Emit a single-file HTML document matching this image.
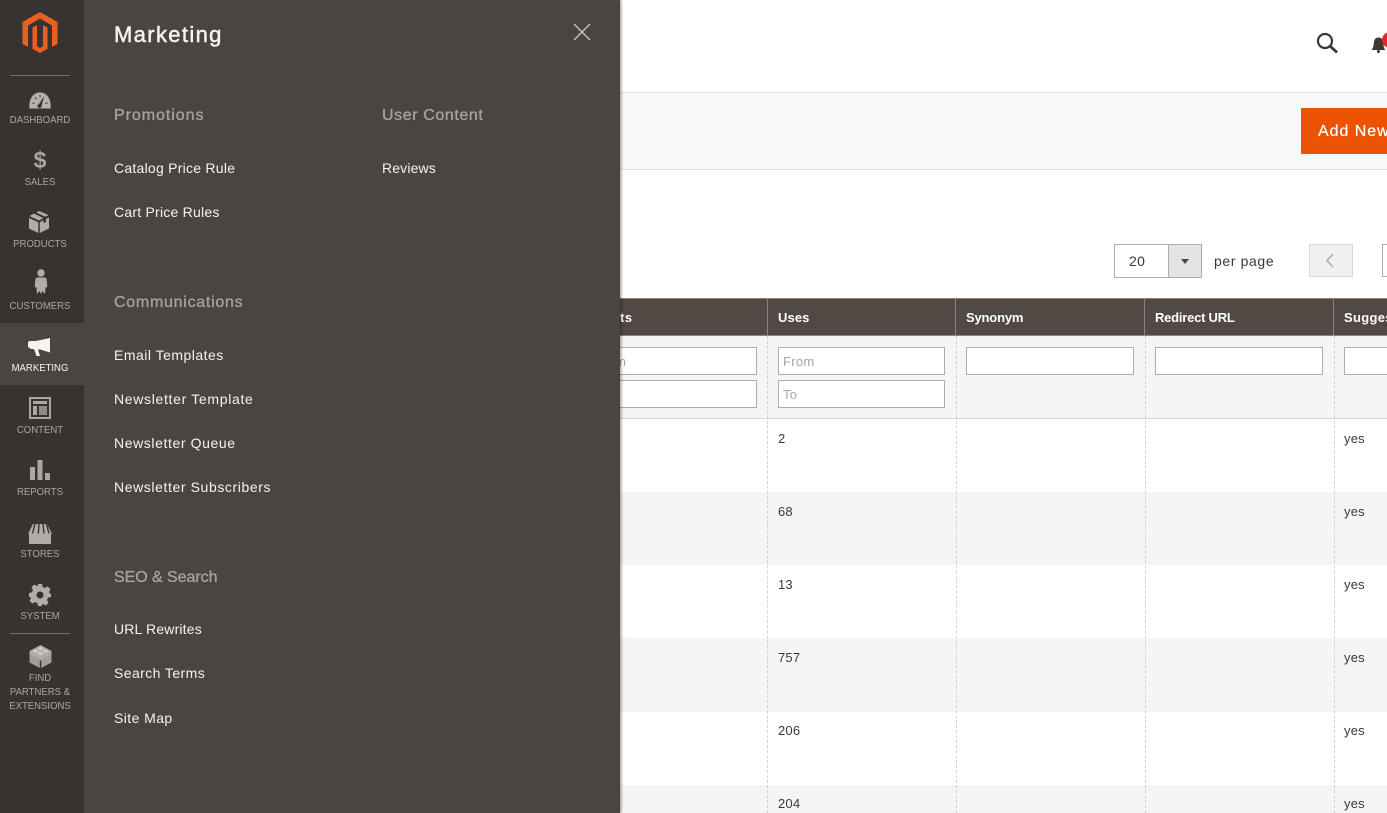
<!DOCTYPE html>
<html><head><meta charset="utf-8">
<style>
html,body{margin:0;padding:0;background:#fff}
body{width:1387px;height:813px;overflow:hidden;position:relative;font-family:"Liberation Sans",sans-serif;color:#41362f}
.a{position:absolute;white-space:nowrap}
#side{position:absolute;left:0;top:0;width:84px;height:813px;background:#373330}
#panel{position:absolute;left:84px;top:0;width:536px;height:813px;background:#4a4542;box-shadow:1px 0 3px rgba(0,0,0,.45)}
.nl{position:absolute;left:0;width:80px;text-align:center;font-size:10.5px;line-height:14px;color:#aaa6a0;transform:scaleX(.91);white-space:nowrap}
.ic{position:absolute}
.h{position:absolute;font-size:16px;font-weight:normal;color:#a6a19c;white-space:nowrap;line-height:20px;-webkit-text-stroke:.35px #a6a19c}
.l{position:absolute;font-size:14px;color:#f7f3eb;white-space:nowrap;line-height:18px}
.th{position:absolute;top:298px;height:38px;background:#514943;border-top:1px solid #8a837f;border-bottom:1px solid #8a837f;box-sizing:border-box}
.tt{position:absolute;top:309px;color:#fff;font-size:13px;font-weight:bold;line-height:17px;white-space:nowrap;letter-spacing:.1px}
.sep{position:absolute;top:298px;width:1px;height:38px;background:#8a837f}
.inp{position:absolute;height:28px;box-sizing:border-box;background:#fff;border:1px solid #adadad;font-size:13px;color:#a5a5a5;line-height:27px;padding-left:4px;letter-spacing:.3px}
.row{position:absolute;left:620px;width:767px}
.c{position:absolute;font-size:13px;color:#41362f;line-height:16px;letter-spacing:.2px}
.dash{position:absolute;top:336px;height:477px;width:0;border-left:1px dashed #d1d1d1}
</style></head><body>

<!-- page -->
<div class="a" style="left:620px;top:92px;width:767px;height:78px;background:#f8f8f8;border-top:1px solid #e3e3e3;border-bottom:1px solid #e3e3e3;box-sizing:border-box"></div>
<svg class="ic" style="left:1314px;top:30px" width="26" height="26" viewBox="0 0 26 26"><circle cx="11" cy="11" r="7" fill="none" stroke="#41362f" stroke-width="2.2"/><path d="M16 16L23 22.500" stroke="#41362f" stroke-width="2.800"/></svg>
<svg class="ic" style="left:1370px;top:32px" width="17" height="22" viewBox="0 0 17 22"><path d="M1.500 18c2-2 2-5 2.500-8 .4-3 2-4.500 4.500-4.500s4 1.500 4.500 4.500c.5 3 .5 6 2.500 8z" fill="#41362f"/><circle cx="8.500" cy="19.500" r="1.500" fill="#41362f"/><circle cx="20" cy="8" r="8" fill="#e22626"/></svg>
<div class="a" style="left:1301px;top:108px;width:86px;height:46px;background:#eb5202;overflow:hidden"><span class="a" style="left:17px;top:14px;color:#fff;font-size:16px;line-height:20px;letter-spacing:.95px;-webkit-text-stroke:.25px #fff">Add New</span></div>

<div class="a" style="left:1114px;top:244px;width:55px;height:34px;box-sizing:border-box;border:1px solid #adadad;background:#fff;font-size:14px;line-height:32px;padding-left:14px;letter-spacing:.4px">20</div>
<div class="a" style="left:1168px;top:244px;width:34px;height:34px;box-sizing:border-box;border:1px solid #adadad;background:#e3e3e3"></div>
<div class="a" style="left:1181px;top:259px;width:0;height:0;border-left:4px solid transparent;border-right:4px solid transparent;border-top:5px solid #514943"></div>
<div class="a" style="left:1214px;top:252px;font-size:14px;line-height:18px;letter-spacing:.62px">per page</div>
<div class="a" style="left:1309px;top:244px;width:44px;height:33px;box-sizing:border-box;border:1px solid #d8d8d8;background:#f0f0f0"></div>
<svg class="ic" style="left:1323px;top:252px" width="14" height="17" viewBox="0 0 14 17"><path d="M10 2L4 8.500 10 15" fill="none" stroke="#b0aead" stroke-width="1.600"/></svg>
<div class="a" style="left:1382px;top:244px;width:8px;height:33px;box-sizing:border-box;border:1px solid #adadad;background:#fff"></div>

<!-- table -->
<div class="th" style="left:620px;width:767px"></div>
<div class="sep" style="left:767px"></div><div class="sep" style="left:955px"></div><div class="sep" style="left:1144px"></div><div class="sep" style="left:1333px"></div>
<div class="tt" style="left:620px;letter-spacing:.5px">ts</div>
<div class="tt" style="left:778px">Uses</div>
<div class="tt" style="left:966px;letter-spacing:-.18px">Synonym</div>
<div class="tt" style="left:1155px;letter-spacing:-.23px">Redirect URL</div>
<div class="tt" style="left:1344px;letter-spacing:.3px">Suggest</div>

<div class="a" style="left:620px;top:336px;width:767px;height:83px;background:#f5f5f5;border-bottom:1px solid #d6d6d6;box-sizing:border-box"></div>
<div class="row" style="top:492px;height:73px;background:#f5f5f5"></div>
<div class="row" style="top:638px;height:74px;background:#f5f5f5"></div>
<div class="row" style="top:785px;height:28px;background:#f5f5f5"></div>
<div class="dash" style="left:767px"></div><div class="dash" style="left:956px"></div><div class="dash" style="left:1145px"></div><div class="dash" style="left:1334px"></div>

<div class="inp" style="left:600px;top:347px;width:157px"></div>
<div class="a" style="left:620px;top:355px;font-size:13px;line-height:14px;color:#a5a5a5;width:6px;overflow:hidden;direction:rtl">m</div>
<div class="inp" style="left:600px;top:380px;width:157px"></div>
<div class="inp" style="left:778px;top:347px;width:167px">From</div>
<div class="inp" style="left:778px;top:380px;width:167px">To</div>
<div class="inp" style="left:966px;top:347px;width:168px"></div>
<div class="inp" style="left:1155px;top:347px;width:168px"></div>
<div class="inp" style="left:1344px;top:347px;width:60px"></div>

<div class="c" style="left:778px;top:431px">2</div><div class="c" style="left:1344px;top:431px">yes</div>
<div class="c" style="left:778px;top:504px">68</div><div class="c" style="left:1344px;top:504px">yes</div>
<div class="c" style="left:778px;top:577px">13</div><div class="c" style="left:1344px;top:577px">yes</div>
<div class="c" style="left:778px;top:650px">757</div><div class="c" style="left:1344px;top:650px">yes</div>
<div class="c" style="left:778px;top:723px">206</div><div class="c" style="left:1344px;top:723px">yes</div>
<div class="c" style="left:778px;top:796px">204</div><div class="c" style="left:1344px;top:796px">yes</div>

<!-- panel -->
<div id="panel"></div>
<div class="a" style="left:114px;top:21px;font-size:22px;line-height:28px;color:#f7f3eb;letter-spacing:1.35px;-webkit-text-stroke:.5px #f7f3eb">Marketing</div>
<svg class="ic" style="left:572px;top:22px" width="20" height="20" viewBox="0 0 20 20"><path d="M2 2L18 18M18 2L2 18" stroke="#c5bfb8" stroke-width="1.500"/></svg>
<div class="h" style="left:114px;top:106px;letter-spacing:.95px">Promotions</div>
<div class="h" style="left:382px;top:106px;letter-spacing:.6px">User Content</div>
<div class="l" style="left:114px;top:159px;letter-spacing:.25px">Catalog Price Rule</div>
<div class="l" style="left:114px;top:203px;letter-spacing:.23px">Cart Price Rules</div>
<div class="l" style="left:382px;top:159px;letter-spacing:.14px">Reviews</div>
<div class="h" style="left:114px;top:293px;letter-spacing:.73px">Communications</div>
<div class="l" style="left:114px;top:346px;letter-spacing:.49px">Email Templates</div>
<div class="l" style="left:114px;top:390px;letter-spacing:.68px">Newsletter Template</div>
<div class="l" style="left:114px;top:434px;letter-spacing:.6px">Newsletter Queue</div>
<div class="l" style="left:114px;top:478px;letter-spacing:.6px">Newsletter Subscribers</div>
<div class="h" style="left:114px;top:568px;letter-spacing:-.05px">SEO &amp; Search</div>
<div class="l" style="left:114px;top:620px;letter-spacing:.17px">URL Rewrites</div>
<div class="l" style="left:114px;top:664px;letter-spacing:.42px">Search Terms</div>
<div class="l" style="left:114px;top:709px;letter-spacing:.42px">Site Map</div>

<!-- sidebar -->
<div id="side"></div>
<svg class="ic" style="left:22px;top:12px" width="37" height="41" viewBox="0 0 37 41"><path d="M18 0L35.500 10V32L30 35V13.500L18 6.500 6 13.500V35L.5 32V10z" fill="#eb5f22"/><path d="M10.500 15.500L15 13V34L18 36 21 34V13L25.500 15.500V37L18 41 10.500 37z" fill="#eb5f22"/></svg>
<div class="a" style="left:10px;top:75px;width:60px;height:1px;background:#736e6a"></div>
<div class="a" style="left:0;top:323px;width:84px;height:62px;background:#4a4542"></div>

<svg class="ic" style="left:29px;top:92px" width="22" height="17" viewBox="0 0 22 17"><path d="M.5 16.500C-.5 7 4 .5 11 .5S22.500 7 21.500 16.500z" fill="#b5b1ab"/><path d="M9.500 13L15 4l-2.500 10.500z" fill="#373330"/><circle cx="10.500" cy="14" r="2" fill="#373330"/><path d="M3.500 11l2 .5M6 5.500L7.500 7M11 3v2M18.500 11l-2 .5" stroke="#373330"/></svg>
<div class="nl" style="top:113px">DASHBOARD</div>
<div class="a" style="left:31px;top:147px;font-size:23px;line-height:26px;font-weight:bold;color:#aaa6a0;width:18px;text-align:center">$</div>
<div class="nl" style="top:175px">SALES</div>
<svg class="ic" style="left:29px;top:211px" width="20" height="22" viewBox="0 0 20 22"><path d="M10 0l9.500 4-3 1.800L7 1.500zM4.800 2.500l9.500 4.500L10 9.500.5 5zM0 7l9.300 4.300V22L0 17.500zM20 6.500v11L10.800 22V11.300l3.700-2v3l2.500-1.300V8z" fill="#b0aca6"/></svg>
<div class="nl" style="top:237px">PRODUCTS</div>
<svg class="ic" style="left:34px;top:269px" width="14" height="26" viewBox="0 0 14 26"><circle cx="7" cy="4" r="3.700" fill="#b0aca6"/><path d="M3.500 8.500h7c1.500 0 2 1 2.200 2.500l.6 7-1.800.5-.5 6.500-2.500-3-1.500 3-1.500-3-2.500 3-.5-6.500-1.800-.5.600-7c.2-1.500.7-2.500 2.200-2.500z" fill="#b0aca6"/></svg>
<div class="nl" style="top:299px">CUSTOMERS</div>
<svg class="ic" style="left:28px;top:338px" width="23" height="19" viewBox="0 0 23 19"><path d="M22 0v14.500L12 11.500H10L12 18H8.500L6 11H3L0 9V4.500L1 3h7z" fill="#f7f3eb"/></svg>
<div class="nl" style="top:361px;color:#f7f3eb">MARKETING</div>
<svg class="ic" style="left:29px;top:397px" width="22" height="22" viewBox="0 0 22 22"><path fill-rule="evenodd" d="M0 0h22v22H0zM2 2v18h18V2zM4 4h14v3H4zM4 9h4v9H4z" fill="#aaa6a0"/><path d="M10 9h8v9h-8z" fill="#8f8b86"/></svg>
<div class="nl" style="top:423px">CONTENT</div>
<svg class="ic" style="left:30px;top:460px" width="20" height="20" viewBox="0 0 20 20"><path d="M0 7h5v13H0zM7.500 0h5v20h-5zM15 13h5v7h-5z" fill="#aaa6a0"/></svg>
<div class="nl" style="top:485px">REPORTS</div>
<svg class="ic" style="left:28px;top:524px" width="24" height="20" viewBox="0 0 24 20"><path d="M5 0h14l5 10H0z" fill="#b0aca6"/><path d="M7 0L4.500 9.500M11 0l-.7 9.500M15 0l1 9.500M18.500 0l2.500 9.500" stroke="#373330" stroke-width="1.400"/><path d="M1 10h22v10H1z" fill="#b0aca6"/></svg>
<div class="nl" style="top:547px">STORES</div>
<svg class="ic" style="left:29px;top:584px" width="22" height="22" viewBox="0 0 22 22"><path fill-rule="evenodd" d="M9 0h4l.7 3 2.300 1 2.700-1.600 2.800 2.800L20 8l1 2.300L22 9v4l-3 .7-1 2.300 1.600 2.700-2.800 2.800L14 20l-1 .5V22H9l-.7-3L6 18l-2.700 1.600-2.800-2.800L2 14l-1-1H0V9l3-.7L4 6 2.400 3.300l2.800-2.800L8 2l1-.5zM11 7.500a3.500 3.500 0 1 0 0 7 3.500 3.500 0 0 0 0-7z" fill="#b0aca6"/></svg>
<div class="nl" style="top:609px">SYSTEM</div>
<div class="a" style="left:10px;top:633px;width:60px;height:1px;background:#736e6a"></div>
<svg class="ic" style="left:29px;top:645px" width="23" height="23" viewBox="0 0 23 23"><path d="M11.500 0l11 6v4l-11 5.500L.5 10V6z" fill="#b0aca6"/><path d="M.5 9l10.300 5.500V23L.5 17.500zM22.500 9l-10.300 5.500V23l10.300-5.500z" fill="#a09c96"/><ellipse cx="11.500" cy="3.500" rx="2.700" ry="1.400" fill="#cfcbc6"/><ellipse cx="6.500" cy="6" rx="2.700" ry="1.400" fill="#cfcbc6"/><ellipse cx="16.500" cy="6" rx="2.700" ry="1.400" fill="#cfcbc6"/><ellipse cx="11.500" cy="8.500" rx="2.700" ry="1.400" fill="#cfcbc6"/></svg>
<div class="nl" style="top:671px">FIND<br>PARTNERS &amp;<br>EXTENSIONS</div>

</body></html>
